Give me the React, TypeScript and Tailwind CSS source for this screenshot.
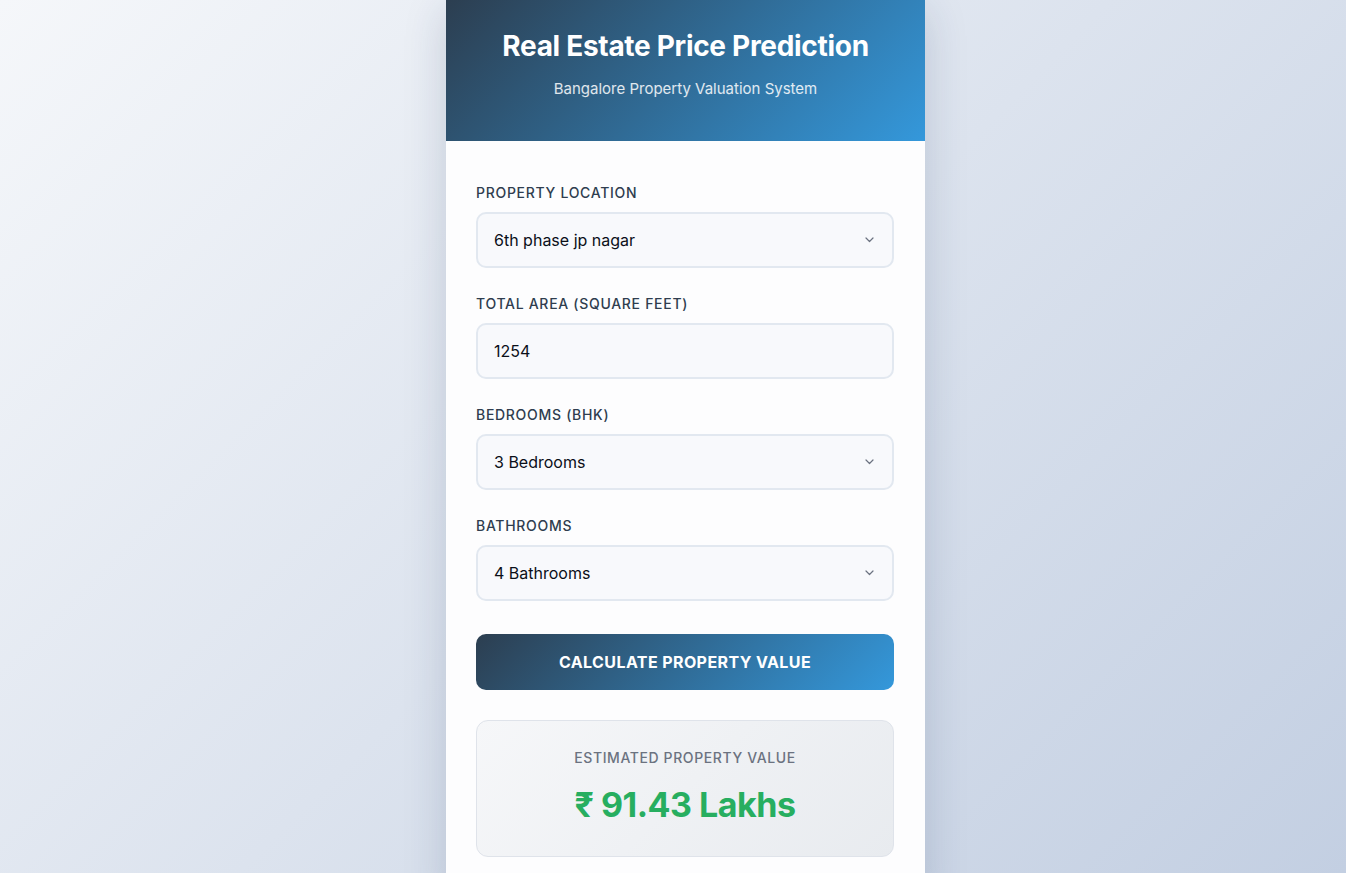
import React from "react";

function Chevron() {
  return (
    <svg width="9" height="6" viewBox="0 0 9 6" className="absolute right-[18px] top-1/2 -translate-y-1/2" fill="none">
      <path d="M1 1l3.5 3.5L8 1" stroke="#6b7280" strokeWidth="1.2" strokeLinecap="round" strokeLinejoin="round" />
    </svg>
  );
}

function Field({ label, value, select }: { label: string; value: string; select?: boolean }) {
  return (
    <div className="mb-[26px]">
      <div className="text-[14px] leading-[20px] font-medium tracking-[0.7px] text-[#2f3d4f] mb-[9px] uppercase">{label}</div>
      <div className="relative h-[56px] rounded-[10px] border-2 border-[#e2e8f0] bg-[#f8f9fc] flex items-center pl-[16px] text-[16px] text-[#0b0f19]">
        {value}
        {select && <Chevron />}
      </div>
    </div>
  );
}

export default function App() {
  return (
    <div
      className="w-full bg-[linear-gradient(135deg,#f5f7fa_0%,#c3cfe2_100%)] flex justify-center overflow-hidden h-[873px] pl-[25px]"
      style={{ fontFamily: "Inter, 'Noto Sans', sans-serif" }}
    >
      <div className="w-[479px] bg-[#fdfdfe] shadow-[0_10px_40px_rgba(30,50,90,0.18)] self-start">
        <div className="h-[141px] bg-[linear-gradient(135deg,#2c3e50_0%,#3498db_100%)] flex flex-col items-center pt-[29px] text-white">
          <h1 className="text-[28px] leading-[34px] font-bold tracking-[-0.3px]">Real Estate Price Prediction</h1>
          <p className="mt-[16px] text-[15px] leading-[20px] text-white/85">Bangalore Property Valuation System</p>
        </div>
        <div className="pl-[30px] pr-[31px] pt-[42px] pb-[40px]">
          <Field label="Property Location" value="6th phase jp nagar" select />
          <Field label="Total Area (Square Feet)" value="1254" />
          <Field label="Bedrooms (BHK)" value="3 Bedrooms" select />
          <Field label="Bathrooms" value="4 Bathrooms" select />
          <button className="mt-[7px] w-full h-[56px] rounded-[10px] bg-[linear-gradient(135deg,#2c3e50_0%,#3498db_100%)] text-white text-[16px] font-bold uppercase tracking-[0.4px]">
            Calculate Property Value
          </button>
          <div className="mt-[30px] h-[137px] rounded-[12px] border border-[#dfe3ea] bg-[linear-gradient(135deg,#f6f7f9_0%,#e8ebef_100%)] flex flex-col items-center pt-[27px]">
            <div className="text-[14px] leading-[20px] font-medium tracking-[0.6px] text-[#6b7280] uppercase">Estimated Property Value</div>
            <div className="mt-[16px] text-[34px] leading-[42px] font-bold tracking-[-0.5px] text-[#27ae60]">₹ 91.43 Lakhs</div>
          </div>
        </div>
      </div>
    </div>
  );
}
